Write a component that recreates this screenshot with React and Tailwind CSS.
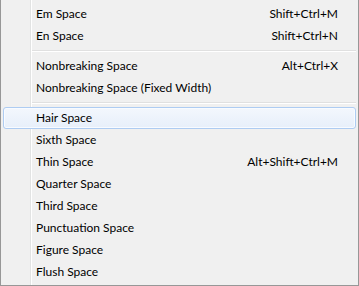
const groups = [
  [
    { label: "Em Space", keys: "Shift+Ctrl+M" },
    { label: "En Space", keys: "Shift+Ctrl+N" },
  ],
  [
    { label: "Nonbreaking Space", keys: "Alt+Ctrl+X" },
    { label: "Nonbreaking Space (Fixed Width)" },
  ],
  [
    { label: "Hair Space", active: true },
    { label: "Sixth Space" },
    { label: "Thin Space", keys: "Alt+Shift+Ctrl+M" },
    { label: "Quarter Space" },
    { label: "Third Space" },
    { label: "Punctuation Space" },
    { label: "Figure Space" },
    { label: "Flush Space" },
  ],
];

const MenuItem = ({ label, keys, active }) => (
  <div
    className={`relative z-10 flex items-center justify-between h-[22px] pl-[32px] pr-[17px] rounded-[3px] border ${
      active
        ? "border-[#aeccf2] bg-[linear-gradient(to_bottom,#f3f7fd,#e7effa)] shadow-[inset_0_0_0_1px_#f8fbff]"
        : "border-transparent"
    }`}
  >
    <span>{label}</span>
    {keys && <span>{keys}</span>}
  </div>
);

const Separator = () => (
  <div className="flex items-center h-[8px] pl-[28px]">
    <div className="w-full border-t border-b border-t-[#e0e0e0] border-b-white" />
  </div>
);

export default function App() {
  return (
    <div
      className="relative w-[359px] h-[286px] bg-[#f0f0f0] border-x border-b border-[#979797] pt-[3px] px-[2px] text-[12px] text-black"
      style={{ fontFamily: "'Segoe UI', Lato, sans-serif" }}
    >
      <div className="absolute top-0 bottom-0 left-[29px] w-[2px] border-l border-r border-l-[#e2e3e3] border-r-white" />
      {groups.map((items, i) => (
        <div key={i}>
          {i > 0 && <Separator />}
          {items.map((item) => (
            <MenuItem key={item.label} {...item} />
          ))}
        </div>
      ))}
    </div>
  );
}
